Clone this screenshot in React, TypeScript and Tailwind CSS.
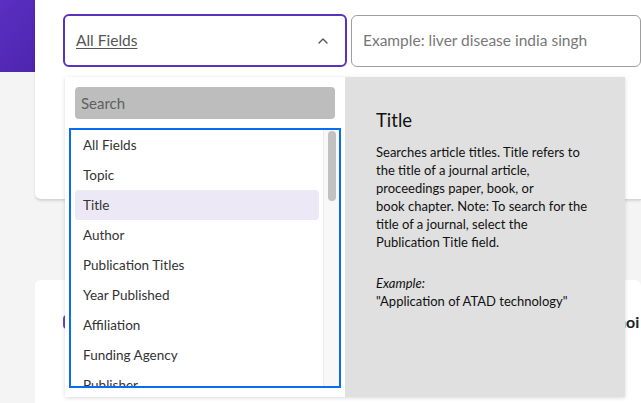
import { ChevronUp } from "lucide-react";

const FIELDS = [
  "All Fields",
  "Topic",
  "Title",
  "Author",
  "Publication Titles",
  "Year Published",
  "Affiliation",
  "Funding Agency",
  "Publisher",
];

export default function App() {
  const selected = "Title";

  return (
    <div
      className="relative w-full h-[403px] overflow-hidden bg-[#f4f4f4]"
      style={{ fontFamily: "Lato, 'Noto Sans', sans-serif" }}
    >
      {/* purple banner behind the cards */}
      <div className="absolute left-0 top-0 w-[60px] h-[72px] bg-gradient-to-br from-[#5a2fc2] to-[#4a22a8]" />

      <div className="relative ml-[35px] flex flex-col">
        {/* search card */}
        <div className="h-[200px] bg-white rounded-bl-md border-b border-[#d6d6d6] shadow-sm">
          <div className="flex pt-[14px] pl-[28px]">
            <div className="w-[284px] h-[53px] border-2 border-[#5b32bf] rounded-md flex items-center justify-between pl-[11px] pr-[14px]">
              <span className="text-[15.5px] text-[#555] underline underline-offset-2">All Fields</span>
              <ChevronUp size={16} strokeWidth={2} className="text-[#555]" />
            </div>
            <div className="ml-[4px] flex-1 h-[52px] mt-[1px] border border-[#9e9e9e] rounded-md flex items-center pl-[11px]">
              <span className="text-[15.5px] text-[#777]">Example: liver disease india singh</span>
            </div>
          </div>
        </div>

        {/* second card */}
        <div className="mt-[80px] h-[140px] bg-white rounded-t-md">
          <div className="flex items-center pt-[30px]">
            <div className="ml-[28px] w-[16px] h-[14px] rounded-sm bg-[#6b3fd0]" />
            <span className="ml-[538px] text-[16px] font-bold text-[#222]">noi</span>
          </div>
        </div>
      </div>

      {/* open dropdown */}
      <div className="absolute left-[65px] top-[77px] w-[560px] h-[320px] flex shadow-[0_1px_4px_rgba(0,0,0,0.15)]">
        <div className="w-[280px] bg-white flex flex-col pt-[10px]">
          <div className="mx-[10px] h-[32px] rounded bg-[#bdbdbd] flex items-center pl-[6px]">
            <span className="text-[15px] text-[#5f5f5f]">Search</span>
          </div>
          <div className="mt-[9px] ml-[4px] w-[272px] h-[260px] border-2 border-[#0a6cf5] flex overflow-hidden">
            <div className="flex-1 flex flex-col pl-[4px] pr-[4px]">
              {FIELDS.map((f) => (
                <div
                  key={f}
                  className={`h-[30px] shrink-0 flex items-center pl-[8px] rounded text-[13.5px] text-[#333] ${
                    f === selected ? "bg-[#ede8f6]" : ""
                  }`}
                >
                  {f}
                </div>
              ))}
            </div>
            <div className="w-[16px] bg-[#f8f8f8] border-l border-[#ececec] pt-[1px] flex justify-center">
              <div className="w-[8px] h-[70px] rounded-full bg-[#c1c1c1]" />
            </div>
          </div>
        </div>
        <div className="flex-1 bg-[#e0e0e0] pl-[31px] pr-[10px] pt-[31px] text-[#111]">
          <div className="text-[18.5px] leading-[24px]">Title</div>
          <p className="mt-[11px] text-[13px] leading-[18px] whitespace-nowrap">
            Searches article titles. Title refers to
            <br />
            the title of a journal article,
            <br />
            proceedings paper, book, or
            <br />
            book chapter. Note: To search for the
            <br />
            title of a journal, select the
            <br />
            Publication Title field.
          </p>
          <p className="mt-[23px] text-[13px] leading-[18px]">
            <span className="italic">Example:</span>
            <br />
            "Application of ATAD technology"
          </p>
        </div>
      </div>
    </div>
  );
}
